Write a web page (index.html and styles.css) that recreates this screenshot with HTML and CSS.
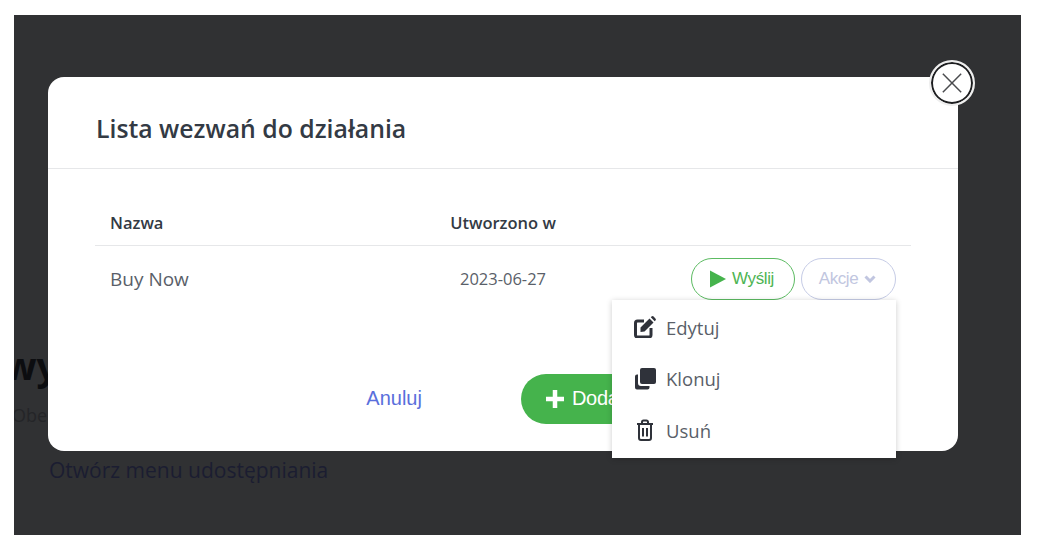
FILE: index.html
```html
<!DOCTYPE html>
<html lang="pl">
  <head>
    <meta charset="UTF-8" />
    <meta name="viewport" content="width=device-width, initial-scale=1.0" />
    <title>Lista wezwań do działania</title>
    <link rel="stylesheet" href="styles.css">
  </head>
  <body>
    <div class="stage">
      <!-- page behind the overlay -->
      <div class="page">
        <h1 class="page-title">wy</h1>
        <p class="page-text">Obe</p>
        <a href="#" class="page-link">Otwórz menu udostępniania</a>
      </div>

      <div class="modal">
        <button class="close-button" aria-label="Zamknij">
          <svg viewBox="0 0 24 24" class="close-icon">
            <path d="M2 2L22 22M22 2L2 22" />
          </svg>
        </button>

        <div class="modal-header">
          <h2>Lista wezwań do działania</h2>
        </div>

        <div class="modal-body">
          <table>
            <thead>
              <tr>
                <th class="col-name">Nazwa</th>
                <th class="col-date">Utworzono w</th>
                <th></th>
              </tr>
            </thead>
            <tbody>
              <tr>
                <td class="col-name">Buy Now</td>
                <td class="col-date">2023-06-27</td>
                <td class="col-actions">
                  <div class="actions">
                    <button class="pill pill-send">
                      <svg viewBox="0 0 16 18" class="play-icon">
                        <path d="M0 0.5L16 9L0 17.5Z" />
                      </svg>
                      Wyślij
                    </button>
                    <button class="pill pill-more">
                      Akcje
                      <svg viewBox="0 0 12 8" class="chevron-icon">
                        <path d="M1.5 1.5L6 6L10.5 1.5" />
                      </svg>
                    </button>
                  </div>
                </td>
              </tr>
            </tbody>
          </table>
        </div>

        <div class="modal-footer">
          <button class="cancel-button">Anuluj</button>
          <button class="add-button">
            <svg viewBox="0 0 20 20" class="plus-icon">
              <path d="M10 1V19M1 10H19" />
            </svg>
            Dodaj
          </button>
        </div>

        <ul class="menu">
          <li class="menu-item">
            <svg viewBox="0 0 22 22" class="menu-icon">
              <path class="line" d="M10 5H3.500a2 2 0 0 0-2 2v12a2 2 0 0 0 2 2h11.500a2 2 0 0 0 2-2v-7" />
              <path d="M6.500 11.500L15.500 2.500L19.500 6.500L10.500 15.500L6.500 16ZM16.800 1.300L17.500 0.600a1.500 1.500 0 0 1 2.100 0L21.400 2.400a1.500 1.500 0 0 1 0 2.100L20.700 5.200Z" />
            </svg>
            Edytuj
          </li>
          <li class="menu-item">
            <svg viewBox="0 0 22 22" class="menu-icon">
              <path d="M8 0H20a2 2 0 0 1 2 2V14a2 2 0 0 1-2 2H8a2 2 0 0 1-2-2V2a2 2 0 0 1 2-2Z" />
              <path d="M4 6.500V15a3 3 0 0 0 3 3H15.500V19.500a2 2 0 0 1-2 2H3a2 2 0 0 1-2-2V8.500a2 2 0 0 1 2-2Z" />
            </svg>
            Klonuj
          </li>
          <li class="menu-item">
            <svg viewBox="0 0 22 22" class="menu-icon">
              <path class="line thin" d="M5 6V19a2 2 0 0 0 2 2H15a2 2 0 0 0 2-2V6M3 5H19M8 5V3a1.500 1.500 0 0 1 1.500-1.500H12.500a1.500 1.500 0 0 1 1.500 1.500V5M9 9V17.500M13 9V17.500" />
            </svg>
            Usuń
          </li>
        </ul>
      </div>
    </div>
  </body>
</html>
```

FILE: styles.css
```css
/* General Styles */
body {
  font-family: "Open Sans", sans-serif;
  margin: 0;
  background-color: white;
}

.stage {
  position: relative;
  height: 520px;
  margin: 15px 22px 0 14px;
  background-color: #303133;
  overflow: hidden;
}

/* Page behind the overlay */
.page {
  padding-top: 325px;
}

.page-title {
  margin: 0 0 0 -10px;
  font-size: 38px;
  line-height: 50px;
  font-weight: 700;
  color: #0c0d10;
}

.page-text {
  margin: 13px 0 0 -2px;
  font-size: 18px;
  line-height: 24px;
  color: #242528;
}

.page-link {
  display: block;
  margin: 29px 0 0 35px;
  font-size: 21px;
  line-height: 28px;
  color: #1b1d31;
  text-decoration: none;
}

/* Modal */
.modal {
  position: absolute;
  left: 34px;
  top: 62px;
  width: 910px;
  height: 374px;
  background-color: white;
  border-radius: 16px;
  display: flex;
  flex-direction: column;
}

.close-button {
  position: absolute;
  right: -17px;
  top: -17px;
  width: 46px;
  height: 46px;
  padding: 0;
  background-color: white;
  border: 2px solid #eeeeee;
  border-radius: 50%;
  box-shadow: inset 0 0 0 2px #1d1e20;
  display: flex;
  align-items: center;
  justify-content: center;
}

.close-icon {
  width: 22px;
  height: 22px;
  fill: none;
  stroke: #4a4b4e;
  stroke-width: 1.600;
}

.modal-header {
  height: 92px;
  box-sizing: border-box;
  padding: 10px 48px 0;
  border-bottom: 1px solid #e6e7e9;
  display: flex;
  align-items: center;
}

.modal-header h2 {
  margin: 0;
  font-size: 24.800px;
  font-weight: 600;
  color: #333a44;
}

.modal-body {
  padding: 36px 47px 0;
}

table {
  width: 100%;
  border-collapse: collapse;
  table-layout: fixed;
}

th {
  height: 40px;
  box-sizing: border-box;
  padding: 0 15px 4px;
  font-size: 16.500px;
  font-weight: 600;
  text-align: left;
  color: #333a44;
  border-bottom: 1px solid #e6e7e9;
}

td {
  height: 66px;
  padding: 0 15px;
  font-size: 19px;
  color: #5a5f69;
}

th.col-name {
  width: 258px;
}

th.col-date {
  width: 300px;
  text-align: center;
}

td.col-date {
  text-align: center;
  font-size: 16.500px;
}

.actions {
  display: flex;
  justify-content: flex-end;
  gap: 6px;
}

.pill {
  height: 42px;
  box-sizing: border-box;
  padding: 0;
  background-color: white;
  border-radius: 21px;
  font-family: "Liberation Sans", sans-serif;
  font-size: 17px;
  letter-spacing: -0.4px;
  display: flex;
  align-items: center;
  justify-content: center;
}

.pill-send {
  width: 104px;
  gap: 6px;
  padding-right: 2px;
  color: #4db453;
  border: 1.500px solid #5cbb62;
}

.pill-more {
  width: 95px;
  gap: 6px;
  padding-right: 2px;
  color: #c1c6e0;
  border: 1.500px solid #c6cce6;
}

.play-icon {
  width: 16px;
  height: 18px;
  fill: #45b34c;
}

.chevron-icon {
  width: 12px;
  height: 8px;
  fill: none;
  stroke: #c1c6e0;
  stroke-width: 3;
}

.modal-footer {
  margin-top: 62px;
  display: flex;
  justify-content: center;
  align-items: center;
  gap: 99px;
}

.cancel-button {
  padding: 0 0 0 7px;
  background: none;
  border: none;
  font-family: "Liberation Sans", sans-serif;
  font-size: 20px;
  color: #5a6fdc;
}

.add-button {
  height: 50px;
  padding: 0 24px;
  background-color: #45b34c;
  border: none;
  border-radius: 25px;
  font-family: "Liberation Sans", sans-serif;
  font-size: 20px;
  letter-spacing: -0.3px;
  color: white;
  display: flex;
  align-items: center;
  gap: 7px;
}

.plus-icon {
  width: 20px;
  height: 20px;
  fill: none;
  stroke: white;
  stroke-width: 4.500;
}

/* Actions dropdown */
.menu {
  position: absolute;
  left: 564px;
  top: 223px;
  width: 284px;
  margin: 0;
  padding: 1.500px 0 0;
  height: 158px;
  box-sizing: border-box;
  list-style: none;
  background-color: white;
  box-shadow: 0 1px 6px rgba(0, 0, 0, 0.2);
}

.menu-item {
  height: 51.500px;
  padding-left: 22px;
  font-size: 18.500px;
  color: #5a5f69;
  display: flex;
  align-items: center;
  gap: 10px;
}

.menu-icon {
  width: 22px;
  height: 22px;
  fill: #2f323a;
}

.menu-icon .line {
  fill: none;
  stroke: #2f323a;
  stroke-width: 3;
}

.menu-icon .thin {
  stroke-width: 2;
}
```
